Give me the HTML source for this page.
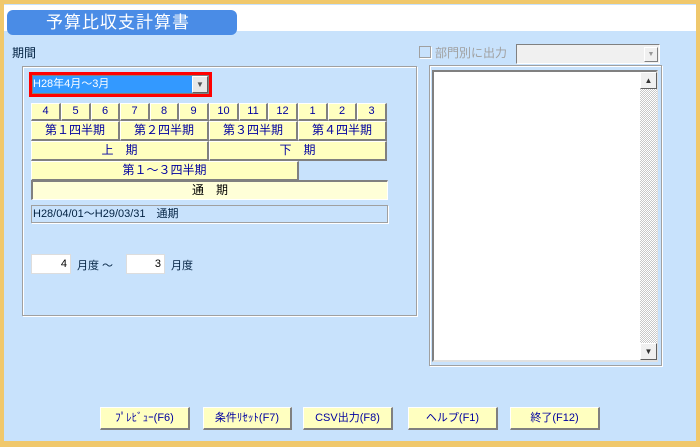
<!DOCTYPE html><html><head><meta charset="utf-8"><style>
*{margin:0;padding:0;box-sizing:border-box}
body{width:700px;height:447px;overflow:hidden;background:#f0c86c;font-family:"Liberation Sans","Noto Sans CJK JP",sans-serif;position:relative}
.a{position:absolute}
#main{left:4px;top:4px;width:692px;height:437px;background:#c8e2fc}
.btn{position:absolute;background:#ffffc0;border:1px solid #fff;border-right:2px solid #808080;border-bottom:2px solid #808080;color:#0000a0;font-size:11px;text-align:center;line-height:15px;white-space:nowrap}
.lbl{position:absolute;font-size:11px;color:#002040;white-space:nowrap}
.grp{position:absolute;border:1px solid #a0a0a0;box-shadow:1px 1px 0 #fff, inset 1px 1px 0 #fff}
</style></head><body>
<div id="main" class="a"></div>
<div class="a" style="left:4px;top:5px;width:692px;height:26px;background:#fff"></div>
<div class="a" style="left:4px;top:31px;width:692px;height:1px;background:#c8e2fc"></div>
<div class="a" style="left:4px;top:33px;width:692px;height:1px;background:#c8e2fc"></div>
<div class="a" style="left:4px;top:35px;width:692px;height:1px;background:#c8e2fc"></div>
<div class="a" style="left:7px;top:10px;width:230px;height:25px;background:#4a8ce6;border-radius:6px;color:#fff;font-size:17px;line-height:25px;padding-left:39px;letter-spacing:1px">予算比収支計算書</div>
<div class="lbl" style="left:12px;top:44px;font-size:12px">期間</div>
<div class="grp" style="left:22px;top:66px;width:395px;height:250px"></div>
<div class="a" style="left:29px;top:72px;width:183px;height:25px;border:3px solid #f00;background:#fff"></div>
<div class="a" style="left:32px;top:75px;width:177px;height:19px;background:#3399ff;border:1px solid #808080"></div>
<div class="a" style="left:33px;top:76px;color:#fff;font-size:11px;line-height:17px">H28年4月～3月</div>
<div class="a" style="left:192px;top:76px;width:16px;height:17px;background:#e8e8e8;border:1px solid #fff;border-right-color:#606060;border-bottom-color:#606060;font-size:8px;color:#555;text-align:center;line-height:15px">▼</div>
<div class="btn" style="left:31px;top:103px;width:30px;height:18px">4</div>
<div class="btn" style="left:61px;top:103px;width:30px;height:18px">5</div>
<div class="btn" style="left:91px;top:103px;width:29px;height:18px">6</div>
<div class="btn" style="left:120px;top:103px;width:30px;height:18px">7</div>
<div class="btn" style="left:150px;top:103px;width:29px;height:18px">8</div>
<div class="btn" style="left:179px;top:103px;width:30px;height:18px">9</div>
<div class="btn" style="left:209px;top:103px;width:30px;height:18px">10</div>
<div class="btn" style="left:239px;top:103px;width:29px;height:18px">11</div>
<div class="btn" style="left:268px;top:103px;width:30px;height:18px">12</div>
<div class="btn" style="left:298px;top:103px;width:30px;height:18px">1</div>
<div class="btn" style="left:328px;top:103px;width:29px;height:18px">2</div>
<div class="btn" style="left:357px;top:103px;width:30px;height:18px">3</div>
<div class="btn" style="left:31px;top:121px;width:89px;height:20px;font-size:12px;line-height:17px">第１四半期</div>
<div class="btn" style="left:120px;top:121px;width:89px;height:20px;font-size:12px;line-height:17px">第２四半期</div>
<div class="btn" style="left:209px;top:121px;width:89px;height:20px;font-size:12px;line-height:17px">第３四半期</div>
<div class="btn" style="left:298px;top:121px;width:89px;height:20px;font-size:12px;line-height:17px">第４四半期</div>
<div class="btn" style="left:31px;top:141px;width:178px;height:20px;font-size:12px;line-height:17px">上　期</div>
<div class="btn" style="left:209px;top:141px;width:178px;height:20px;font-size:12px;line-height:17px">下　期</div>
<div class="btn" style="left:31px;top:161px;width:268px;height:20px;font-size:12px;line-height:17px">第１～３四半期</div>
<div class="btn" style="left:31px;top:180px;width:357px;height:20px;background:#ffffd8;border:2px solid #808080;border-right:1px solid #fff;border-bottom:1px solid #fff;color:#000;font-size:12px;line-height:16px">通　期</div>
<div class="a" style="left:31px;top:205px;width:357px;height:18px;border:1px solid #a0a0a0;box-shadow:1px 1px 0 #fff;font-size:11px;line-height:16px;padding-left:1px;color:#002040">H28/04/01～H29/03/31　通期</div>
<div class="a" style="left:31px;top:254px;width:40px;height:20px;background:#fff;border:1px solid #ddd;font-size:11px;text-align:right;padding-right:3px;line-height:18px">4</div>
<div class="lbl" style="left:77px;top:257px">月度 ～</div>
<div class="a" style="left:126px;top:254px;width:39px;height:20px;background:#fff;border:1px solid #ddd;font-size:11px;text-align:right;padding-right:3px;line-height:18px">3</div>
<div class="lbl" style="left:171px;top:257px">月度</div>
<div class="a" style="left:419px;top:46px;width:12px;height:12px;border:1px solid #a0a0a0;background:#c8e2fc;box-shadow:1px 1px 0 #fff"></div>
<div class="lbl" style="left:435px;top:44px;color:#a0a0a0;font-size:12px">部門別に出力</div>
<div class="a" style="left:516px;top:44px;width:144px;height:20px;background:#f0f0f0;border:1px solid #808080;border-right-color:#fff;border-bottom-color:#fff"></div>
<div class="a" style="left:644px;top:47px;width:14px;height:15px;background:#f0f0f0;border:1px solid #fff;border-right-color:#808080;border-bottom-color:#808080;font-size:7px;color:#999;text-align:center;line-height:14px">▼</div>
<div class="grp" style="left:429px;top:65px;width:233px;height:301px"></div>
<div class="a" style="left:432px;top:70px;width:226px;height:292px;background:#fff;border:2px solid #808080;border-right-color:#e0e0e0;border-bottom-color:#e0e0e0"></div>
<div class="a" style="left:640px;top:72px;width:17px;height:288px;background:repeating-conic-gradient(#c8c8c8 0 25%,#fff 0 50%) 0 0/2px 2px"></div>
<div class="a" style="left:640px;top:72px;width:17px;height:17px;background:#f0f0f0;border:1px solid #fff;border-right-color:#606060;border-bottom-color:#606060;font-size:8px;text-align:center;line-height:15px;color:#333">▲</div>
<div class="a" style="left:640px;top:343px;width:17px;height:17px;background:#f0f0f0;border:1px solid #fff;border-right-color:#606060;border-bottom-color:#606060;font-size:8px;text-align:center;line-height:15px;color:#333">▼</div>
<div class="btn" style="left:100px;top:407px;width:90px;height:23px;line-height:20px">ﾌﾟﾚﾋﾞｭｰ(F6)</div>
<div class="btn" style="left:203px;top:407px;width:89px;height:23px;line-height:20px">条件ﾘｾｯﾄ(F7)</div>
<div class="btn" style="left:303px;top:407px;width:90px;height:23px;line-height:20px">CSV出力(F8)</div>
<div class="btn" style="left:408px;top:407px;width:90px;height:23px;line-height:20px">ヘルプ(F1)</div>
<div class="btn" style="left:510px;top:407px;width:90px;height:23px;line-height:20px">終了(F12)</div>
</body></html>
